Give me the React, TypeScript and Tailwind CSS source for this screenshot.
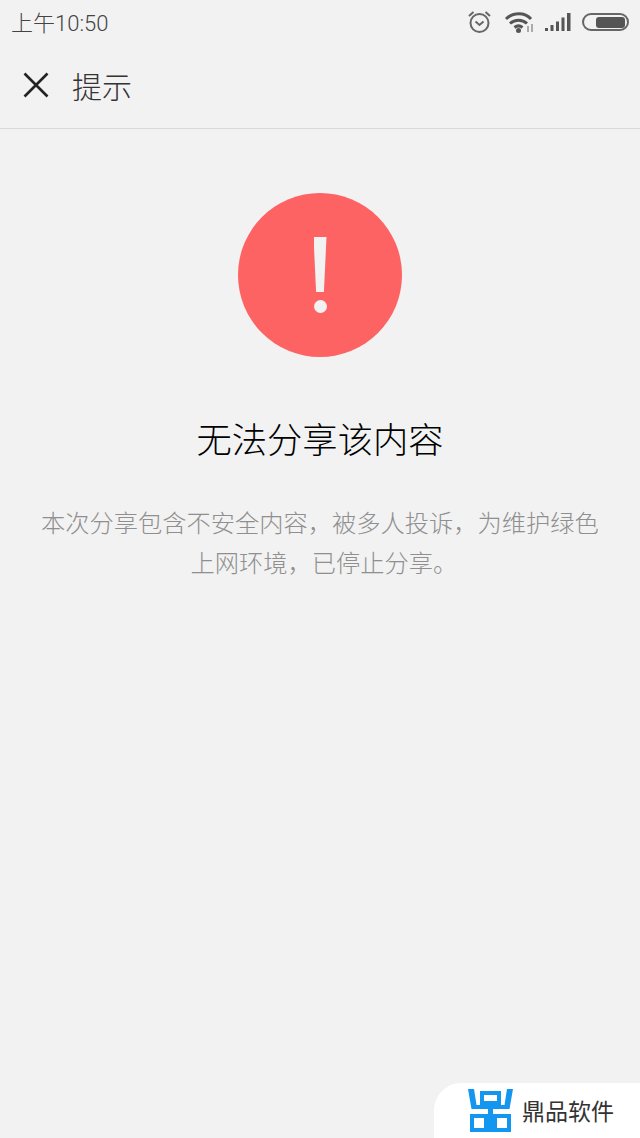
import React from "react";

const cjk = '"Noto Sans CJK SC", "Noto Sans", sans-serif';

const StatusIcons = () => (
  <div className="flex items-center">
    <svg width="25" height="24" viewBox="0 0 25 24" fill="none" stroke="#666" strokeWidth="2">
      <circle cx="12.500" cy="13" r="9" />
      <path d="M8.500 11.500l4 3.500 4-3.500M2 6l4.500-4M23 6l-4.500-4" />
    </svg>
    <svg className="ml-[12px]" width="30" height="22" viewBox="0 0 30 22" fill="none" stroke="#555" strokeWidth="3">
      <path d="M2 8c7-7 19-7 25 0M6 12.500c5-4.500 12-4.500 17 0M10.500 16.500c2.500-2 5.500-2 8 0" />
      <circle cx="14.500" cy="19.500" r="2.500" fill="#555" stroke="none" />
      <path d="M24 15v6M28 13v8" stroke="#aaa" strokeWidth="2" />
    </svg>
    <svg className="ml-[10px]" width="28" height="20" viewBox="0 0 28 20" fill="#555">
      <path d="M1 16h3v3H1zM6.500 13h3v6h-3zM12 9.500h3V19h-3zM17.500 5.500h3V19h-3zM23 1h3.500v18H23z" />
    </svg>
    <div className="ml-[10px] flex items-center">
      <div className="flex h-[18px] w-[47px] items-center justify-end rounded-[9px] border-2 border-[#666] pr-[2px]">
        <div className="h-[11px] w-[29px] rounded-[3px] bg-[#555]" />
      </div>
    </div>
  </div>
);

const App: React.FC = () => {
  return (
    <div className="relative flex h-[1138px] w-[640px] flex-col overflow-hidden bg-[#f2f2f2]" style={{ fontFamily: cjk }}>
      <div className="flex h-[44px] items-center justify-between pl-[11px] pr-[11px]">
        <span className="pt-[2px] text-[22px] font-light text-[#444]" style={{ fontFamily: '"Roboto", "Noto Sans CJK SC", sans-serif' }}>上午10:50</span>
        <StatusIcons />
      </div>
      <div className="flex h-[85px] items-center border-b border-[#d9d9d9] pb-[2px]">
        <svg className="ml-[23px]" width="26" height="26" viewBox="0 0 26 26" stroke="#222" strokeWidth="2.600" fill="none">
          <path d="M1.500 1.500l23 23M24.500 1.500l-23 23" />
        </svg>
        <span className="ml-[23px] text-[30px] font-light leading-none text-[#333]">提示</span>
      </div>
      <div className="flex flex-col items-center">
        <div className="mt-[64px] flex h-[164px] w-[164px] flex-col items-center justify-center rounded-full bg-[#fd6363]">
          <div className="h-[55px] w-[13px] bg-[#f2f2f2] [clip-path:polygon(0_0,100%_0,80%_100%,20%_100%)]" />
          <div className="mt-[8px] h-[13px] w-[13px] rounded-full bg-[#f2f2f2]" />
        </div>
        <h1 className="mt-[57px] text-[35.300px] font-light leading-[48px] text-black">无法分享该内容</h1>
        <p className="mt-[40px] w-[570px] text-center text-[24.250px] font-light leading-[40px] text-[#8f8f8f]">
          <span className="block">本次分享包含不安全内容，被多人投诉，为维护绿色</span>
          <span className="block pl-[8px]">上网环境，已停止分享。</span>
        </p>
      </div>
      <div className="absolute bottom-0 right-0 flex h-[55px] w-[206px] items-center rounded-tl-[27px] bg-white pl-[34px]">
        <svg width="46" height="43" viewBox="0 0 46 43" fill="#1296ef">
          <path d="M0 0h6l2.500 16h28L39 0h6l-3.500 20h-38z" />
          <path d="M12 2h21v14H12zM16 6v6h13V6z" fillRule="evenodd" />
          <path d="M20 20h5v23h-5z" />
          <path d="M2 25h18v18H2zM6 29v10h10V29zM25 25h18v18H25zM29 29v10h10V29z" fillRule="evenodd" />
        </svg>
        <span className="ml-[8px] text-[23px] font-normal text-[#333]">鼎品软件</span>
      </div>
    </div>
  );
};

export default App;
